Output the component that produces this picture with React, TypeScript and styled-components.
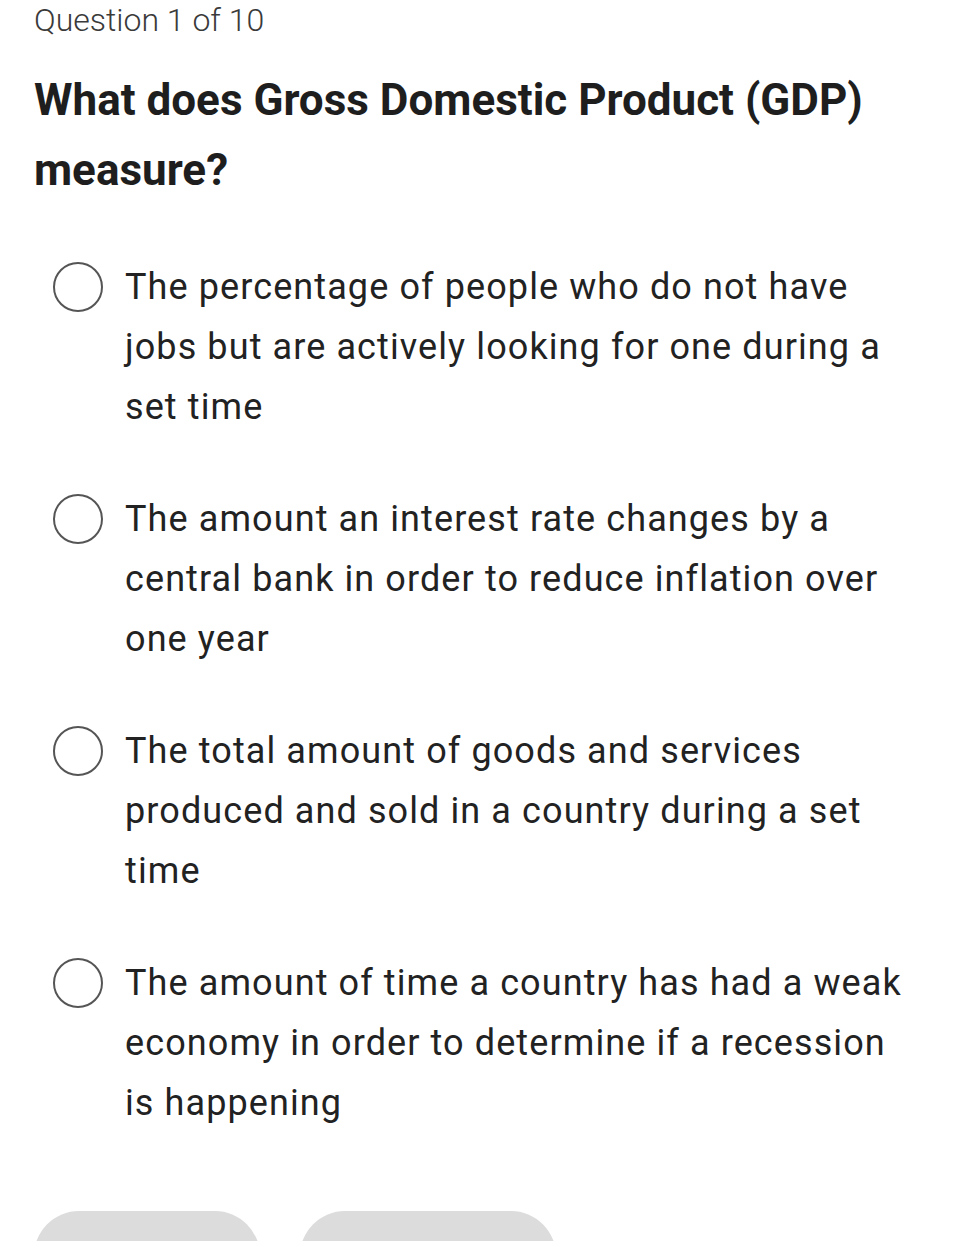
import React from "react";
import styled, { createGlobalStyle } from "styled-components";

const Global = createGlobalStyle`
  html, body { margin: 0; padding: 0; background: #ffffff; }
  body { font-family: Roboto, "Noto Sans", Arial, sans-serif; color: #222222; -webkit-font-smoothing: antialiased; }
`;

const Page = styled.div`
  padding: 2px 0 0 34px;
  height: 1241px;
  box-sizing: border-box;
  overflow: hidden;
  display: flex;
  flex-direction: column;
`;

const Counter = styled.div`
  font-size: 32px;
  line-height: 36px;
  font-weight: 300;
  color: #3a3a3a;
`;

const Heading = styled.h1`
  margin: 27px 0 0 0;
  font-size: 44px;
  line-height: 70px;
  font-weight: 700;
  color: #1e1e1e;
  max-width: 880px;
`;

const OptionList = styled.div`
  margin-top: 52px;
  padding-left: 19px;
  display: flex;
  flex-direction: column;
  gap: 52px;
`;

const Option = styled.label`
  display: flex;
  align-items: flex-start;
  gap: 22px;
  cursor: pointer;
`;

const Radio = styled.span`
  flex: 0 0 auto;
  width: 50px;
  height: 50px;
  margin-top: 5px;
  box-sizing: border-box;
  border: 2.5px solid #555555;
  border-radius: 50%;
`;

const OptionText = styled.span`
  font-size: 36px;
  line-height: 60px;
  font-weight: 400;
  letter-spacing: 1.1px;
  color: #222222;
  max-width: 792px;
`;

const Buttons = styled.div`
  margin-top: 78px;
  display: flex;
  gap: 40px;
`;

const Pill = styled.div<{ $w: number }>`
  width: ${(p) => p.$w}px;
  height: 90px;
  border-radius: 45px;
  background: #dcdcdc;
`;

const options = [
  "The percentage of people who do not have jobs but are actively looking for one during a set time",
  "The amount an interest rate changes by a central bank in order to reduce inflation over one year",
  "The total amount of goods and services produced and sold in a country during a set time",
  "The amount of time a country has had a weak economy in order to determine if a recession is happening",
];

export default function App() {
  return (
    <>
      <Global />
      <Page>
        <Counter>Question 1 of 10</Counter>
        <Heading>What does Gross Domestic Product (GDP) measure?</Heading>
        <OptionList>
          {options.map((o) => (
            <Option key={o}>
              <Radio />
              <OptionText>{o}</OptionText>
            </Option>
          ))}
        </OptionList>
        <Buttons>
          <Pill $w={226} />
          <Pill $w={256} />
        </Buttons>
      </Page>
    </>
  );
}
